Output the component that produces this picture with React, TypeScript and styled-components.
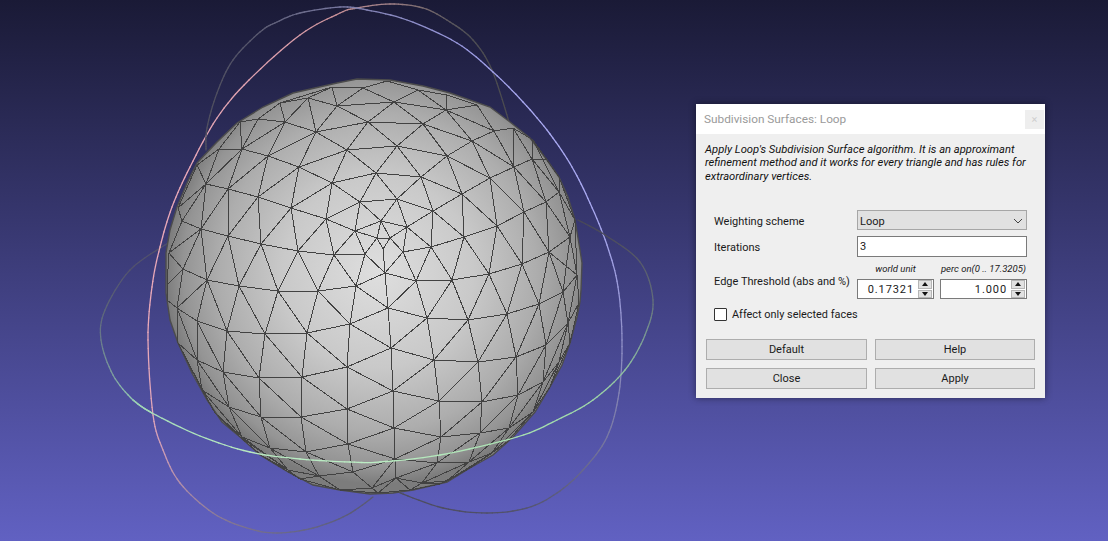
import React, { useMemo } from "react";
import styled, { createGlobalStyle } from "styled-components";

const Global = createGlobalStyle`
  html, body { margin: 0; padding: 0; width: 1108px; height: 541px; overflow: hidden; }
  #root { width: 1108px; height: 541px; }
`;

const Viewport = styled.div`
  position: relative;
  width: 1108px;
  height: 541px;
  overflow: hidden;
  background: linear-gradient(180deg, #1a1a36 0%, #6161c2 100%);
  font-family: Roboto, "Noto Sans", sans-serif;
`;
const Scene = styled.svg`
  position: absolute;
  inset: 0;
  display: block;
`;
const Dialog = styled.div`
  position: absolute;
  left: 696px;
  top: 104px;
  width: 349px;
  height: 294px;
  background: #efefef;
  box-shadow: 0 0 7px rgba(0, 0, 0, 0.45);
  display: flex;
  flex-direction: column;
  color: #1a1a1a;
  font-size: 11px;
`;
const TitleBar = styled.div`
  height: 30px;
  background: #ffffff;
  display: flex;
  align-items: center;
  justify-content: space-between;
  padding: 0 1px 0 8px;
`;
const Title = styled.span`
  font-size: 11.8px;
  color: #9a9a9a;
`;
const CloseButton = styled.div`
  width: 19px;
  height: 19px;
  background: #eeeeee;
  color: #cfcfcf;
  font-size: 11px;
  line-height: 19px;
  text-align: center;
`;
const Description = styled.p`
  margin: 9px 9px 0;
  font-style: italic;
  font-size: 11.2px;
  line-height: 13.4px;
  height: 40px;
  color: #111;
`;
const Form = styled.div`
  margin: 27px 18px 0;
  display: grid;
  grid-template-columns: 143px 170px;
  row-gap: 6px;
  align-items: center;
`;
const Label = styled.label`
  font-size: 11px;
  padding-top: 2px;
  white-space: nowrap;
`;
const Select = styled.div`
  height: 20px;
  box-sizing: border-box;
  background: #e1e1e1;
  border: 1px solid #a6a6a6;
  display: flex;
  align-items: center;
  justify-content: space-between;
  padding: 2px 3px 0 2px;
  font-size: 11px;
`;
const TextInput = styled.div`
  height: 21px;
  box-sizing: border-box;
  background: #fff;
  border: 1px solid #7a7a7a;
  padding-left: 2px;
  line-height: 20px;
  font-size: 11px;
`;
const EdgeLabel = styled(Label)`
  align-self: start;
  padding-top: 12px;
`;
const EdgeFields = styled.div`
  margin-top: -1px;
  display: grid;
  grid-template-columns: 77px 87px;
  column-gap: 6px;
`;
const Hint = styled.span`
  font-style: italic;
  font-size: 9.5px;
  line-height: 14px;
  height: 17px;
  text-align: center;
  white-space: nowrap;
`;
const Spin = styled.div`
  height: 20px;
  box-sizing: border-box;
  background: #fff;
  border: 1px solid #7a7a7a;
  display: flex;
  align-items: center;
  justify-content: flex-end;
  font-size: 11px;
  letter-spacing: 0.9px;
`;
const SpinValue = styled.span`
  margin-right: 4px;
`;
const SpinButtons = styled.div`
  width: 14px;
  height: 18px;
  margin-right: 1px;
  display: flex;
  flex-direction: column;
  gap: 1px;
`;
const SpinButton = styled.div<{ $up?: boolean }>`
  flex: 1;
  background: #e1e1e1;
  border: 1px solid #b5b5b5;
  display: flex;
  align-items: center;
  justify-content: center;
  &::after {
    content: "";
    border-left: 3.5px solid transparent;
    border-right: 3.5px solid transparent;
    ${(p) => (p.$up ? "border-bottom: 4px solid #111;" : "border-top: 4px solid #111;")}
  }
`;
const CheckRow = styled.div`
  margin: 9px 0 0 18px;
  display: flex;
  align-items: center;
  gap: 5px;
  font-size: 10.9px;
`;
const CheckBox = styled.span`
  width: 13px;
  height: 13px;
  box-sizing: border-box;
  background: #fff;
  border: 1px solid #333;
  border-radius: 1px;
`;
const Buttons = styled.div`
  margin: 18px 10px 0;
  display: grid;
  grid-template-columns: 161px 160px;
  column-gap: 8px;
  row-gap: 8px;
`;
const Button = styled.div`
  height: 21px;
  box-sizing: border-box;
  background: #e1e1e1;
  border: 1px solid #adadad;
  text-align: center;
  line-height: 20px;
  font-size: 11px;
`;

const P: Record<string, [number, number]> = {
  v1:[337,106],v2:[394,102],v3:[446,110],v4:[285,122],v5:[316,132],v6:[368,122],v7:[423,124],v8:[472,141],v9:[299,167],v10:[347,150],
  v11:[397,146],v12:[447,156],v13:[490,178],v14:[332,183],v15:[376,173],v16:[421,177],v17:[462,194],v18:[291,208],v19:[360,202],v20:[397,199],
  v21:[433,211],v22:[497,226],v23:[326,219],v24:[381,221],v25:[407,227],v26:[464,237],v27:[355,231],v28:[298,251],v29:[334,255],v30:[365,254],
  v31:[403,252],v32:[431,247],v33:[383,249],v34:[385,273],v35:[416,281],v36:[452,280],v37:[489,274],v38:[356,286],s1:[377,238],s2:[390,238],
  t1:[363,88],t2:[418,90],t3:[308,98],t4:[280,103],t5:[332,87],t6:[387,81],t7:[477,105],t8:[494,131],t9:[513,128],t10:[533,140],t11:[447,95],
  a1:[268,156],a2:[242,149],a3:[258,197],a4:[228,189],a5:[206,184],a6:[201,229],a7:[228,236],a8:[261,244],a9:[318,291],a10:[278,291],a11:[239,286],
  a12:[207,280],a13:[183,269],a14:[169,253],a15:[182,221],a16:[258,119],f1:[219,149],f2:[197,165],f3:[240,122],f4:[178,208],
  b1:[388,308],b2:[350,324],b3:[307,333],b4:[265,334],b5:[227,331],b6:[197,321],b7:[177,308],b8:[347,367],b9:[302,377],b10:[259,378],
  b11:[223,372],b12:[197,360],b13:[178,343],b14:[347,409],b15:[301,417],b16:[261,417],b17:[229,407],b18:[202,390],b19:[348,444],b20:[306,452],
  b21:[270,448],b22:[242,437],b23:[353,472],b24:[319,476],b25:[288,470],b26:[372,488],
  c1:[427,318],c2:[391,348],c3:[434,360],c4:[393,391],c5:[439,401],c6:[394,428],c7:[441,437],c8:[395,459],c9:[437,463],c10:[396,478],c11:[422,483],
  d1:[468,320],d2:[507,314],d3:[539,304],d4:[563,292],d5:[478,362],d6:[516,357],d7:[546,345],d8:[568,323],d9:[482,402],d10:[518,395],d11:[543,382],
  d12:[559,362],d13:[480,433],d14:[509,428],d15:[533,412],d16:[469,462],d17:[492,453],d18:[447,481],
  e1:[514,167],e2:[532,159],e3:[524,212],e4:[546,202],e5:[559,192],e6:[549,252],e7:[570,237],e8:[522,264],e9:[577,275],e10:[575,220],e11:[559,177],e12:[547,160],
  g1:[550,387],h2:[190,366],h3:[215,413],h4:[240,437],h5:[262,456],h6:[300,479],h7:[340,490],h8:[378,493],h9:[410,490],h10:[440,484],h11:[470,468],h12:[507,442],h14:[579,303],h15:[570,343],
  r1:[167,285],r2:[167,300],
};

const CHAINS = [
  "a13 a12 a11 a10 a9 v38 v34 v35 v36 v37 e8 e6 e7 e10",
  "b7 b6 b5 b4 b3 b2 b1 c1 d1 d2 d3 d4 e9",
  "b13 b12 b11 b10 b9 b8 c2 c3 d5 d6 d7 d8",
  "b18 b17 b16 b15 b14 c4 c5 d9 d10 d11 d12",
  "b22 b21 b20 b19 c6 c7 d13 d14 d15 g1",
  "b25 b24 b23 c8 c9 d16 d17 h12",
  "b26 c10 c11 d18",
  "b7 a12 b6 a12 b5 a11 b4 a10 b3 a9 b2 v38 b1 v34",
  "b1 v35 c1 v36 d1 v37 d2 e8 d3 e6 d4 e7 e9 e6",
  "b7 b12 b6 b11 b5 b10 b4 b9 b3 b8 b2 c2 b1",
  "c2 c1 c3 d1 d5 d2 d6 d3 d7 d4 d8 e9",
  "b13 b18 b12 b17 b11 b16 b10 b15 b9 b14 b8 c4 c2",
  "c4 c3 c5 d5 d9 d6 d10 d7 d11 d8 d12",
  "b18 b22 b17 b21 b16 b20 b15 b19 b14 c6 c4",
  "c6 c5 c7 d9 d13 d10 d14 d11 d15 d12 g1",
  "b22 b25 b21 b24 b20 b23 b19 c8 c6",
  "c8 c7 c9 d13 d16 d14 d17 d15",
  "b23 b26 c8 c10 c9 c11 d16 d18 d17",
  "a14 a6 a7 a8 v28 v29 v30 s1 v33 s2 v31 v32 v26 v22 e3 e4 e5 e11",
  "a14 a13 a6 a12 a7 a11 a8 a10 v28 a9 v29 v38 v30 v34 v33",
  "v34 v31 v35 v32 v36 v26 v37 v22 e8 e3 e6 e4 e7 e5 e10 e7",
  "a15 a5 a4 a3 v18 v23 v27",
  "a5 a6 a4 a7 a3 a8 v18 v28 v23 v29 v27 v30",
  "v27 s1 v24 s2 v25 v31",
  "v27 v24 v25 v32 v21 v25",
  "s1 s2",
  "v21 v26 v17 v22 v13 e3 e1 e4 e2 e5",
  "a5 a2 a4 a1 a3 v9 v18 v14 v23 v19 v27",
  "f3 a16 v4 v5 v6 v7 v8 t8",
  "t4 t3 v1 v2 v3 t8 t9 t10 e12",
  "v4 t3 v5 v1 v6 v2 v7 v3 v8 t8 e1 t9 e2 t10 e5",
  "a16 t4 v4 a2 a16",
  "t4 t5 t3",
  "t5 v1 t1 v2 t2 v3 t11 t7 t8",
  "t5 t1 t6 t2 t11",
  "v3 t7",
  "a2 a1 v9 v10 v11 v12 v13 e1 e2 e12 e11",
  "v4 a1 v5 v9",
  "v5 v10 v6 v11 v7 v12 v8 v13",
  "e1 v8",
  "v14 v15 v16 v17",
  "v9 v14 v10 v15 v11 v16 v12 v17 v13",
  "v23 v19 v20 v21",
  "v14 v19 v15 v20 v16 v21 v17",
  "v19 v24 v20 v25",
  "f1 a2 f3 f1 a5 f2 f1",
  "f4 a5 a6 a15 f4 f2",
  "a14 a15",
  "a13 b7 r2 r1 a13",
  "r1 a14",
  "b7 b13 h2 b18 h3 b22 h4 b25 h5 h4 h3 h2",
  "b25 h6 h5",
  "b24 h6 h7 b24",
  "h7 b26 h8 h7",
  "c10 h8 h9 c10",
  "c11 h9 h10 c11",
  "d18 h10 h11 d18",
  "d17 h11 h12 d15",
  "d8 h14 e9",
  "d8 h15 h14",
  "d12 h15 g1",
  "e10 e11",
  "e9 e10",
];

const SILHOUETTE =
  "357,79 390,80 423,86 450,93 490,107 510,122 530,138 547,160 559,177 568,197 575,220 580,250 582,263 581,290 580,302 577,317 570,343 562,365 550,387 535,412 513,437 493,455 470,468 447,482 413,490 393,493 370,494 340,490 313,485 288,472 260,455 240,437 222,422 207,400 192,373 178,343 170,320 166,293 166,253 170,230 177,207 187,183 197,163 217,142 237,123 263,107 293,93 337,83";

type RingPoint = [number, number, string];

const hex = (c: string) => [1, 3, 5].map((i) => parseInt(c.slice(i, i + 2), 16));
const mix = (a: string, b: string, t: number) => {
  const A = hex(a);
  const B = hex(b);
  return `rgb(${A.map((v, i) => Math.round(v + (B[i] - v) * t)).join(",")})`;
};

function Ring({ points, width = 1.3 }: { points: RingPoint[]; width?: number }) {
  const segments = useMemo(() => {
    const out: { d: string; stroke: string }[] = [];
    for (let i = 0; i < points.length - 1; i++) {
      const p0 = points[Math.max(0, i - 1)];
      const p1 = points[i];
      const p2 = points[i + 1];
      const p3 = points[Math.min(points.length - 1, i + 2)];
      let prev: [number, number] = [p1[0], p1[1]];
      const N = 8;
      for (let s = 1; s <= N; s++) {
        const t = s / N;
        const f = (k: 0 | 1) =>
          0.5 *
          (2 * p1[k] +
            (p2[k] - p0[k]) * t +
            (2 * p0[k] - 5 * p1[k] + 4 * p2[k] - p3[k]) * t * t +
            (3 * p1[k] - p0[k] - 3 * p2[k] + p3[k]) * t * t * t);
        const cur: [number, number] = [f(0), f(1)];
        out.push({
          d: `M${prev[0].toFixed(1)} ${prev[1].toFixed(1)}L${cur[0].toFixed(1)} ${cur[1].toFixed(1)}`,
          stroke: mix(p1[2], p2[2], t),
        });
        prev = cur;
      }
    }
    return out;
  }, [points]);
  return (
    <g fill="none" strokeWidth={width} strokeLinecap="round">
      {segments.map((s, i) => (
        <path key={i} d={s.d} stroke={s.stroke} />
      ))}
    </g>
  );
}

const GREEN_BACK: RingPoint[] = [
  [168,243,"#50506a"],[130,270,"#52526e"],[105,310,"#5c6478"],[101,340,"#68788a"],[113,375,"#7c9c9c"],[133,400,"#94c8b0"],[152,413,"#a6dcb8"],
];
const GREEN_FRONT: RingPoint[] = [
  [133,400,"#94c8b0"],[152,413,"#a6dcb8"],[200,436,"#aee4bc"],[250,452,"#b8e8c0"],[300,459,"#b8eac2"],[350,462,"#bcecc4"],[380,462,"#bcecc4"],
  [440,455,"#b4e8bc"],[517,437,"#a8e0b0"],[557,420,"#a2dcac"],[593,400,"#a0d8a8"],[625,370,"#90c0a0"],[645,335,"#7c9c94"],[653,300,"#64707c"],[640,262,"#585c6c"],[605,235,"#4c4c5c"],[578,220,"#484858"],
];
const PINK: RingPoint[] = [
  [373,497,"#5a5a70"],[347,515,"#5c5c78"],[313,528,"#646482"],[277,533,"#6c6a8a"],[247,528,"#78708e"],[213,513,"#8c7c98"],[180,483,"#b08ea8"],[163,450,"#cc9cb4"],[153,415,"#dca4b8"],
  [148,340,"#e8a8b8"],[152,287,"#e8a8b8"],[160,247,"#e8a8b8"],[172,207,"#e8a8b8"],[190,167,"#e8a8b8"],[217,118,"#e4a6b4"],[249,80,"#e0a2b0"],[300,35,"#d89ca8"],
  [340,13,"#c89098"],[357,8,"#b88c90"],[390,4,"#a08088"],[423,8,"#7c6c70"],[450,22,"#5e5a60"],[473,40,"#4e4e54"],[492,70,"#4c4c50"],[510,125,"#4c4c50"],
];
const BLUE: RingPoint[] = [
  [206,150,"#505060"],[207,128,"#505060"],[217,93,"#505060"],[233,60,"#525266"],[260,32,"#5a5a70"],[277,22,"#62627c"],[300,13,"#6a6a88"],[340,7,"#7878a0"],[367,10,"#8080b0"],
  [407,20,"#8c8cc4"],[457,43,"#9898dc"],[493,72,"#a0a0e8"],[523,102,"#a8a8f0"],[550,134,"#aaaaf2"],[572,167,"#aaaaf2"],[590,203,"#aaaaf2"],[607,245,"#a4a4e8"],[618,287,"#9c9cdc"],[622,340,"#9090c8"],
  [619,393,"#8484b4"],[607,437,"#7a7aa4"],[583,470,"#6a6a8c"],[557,493,"#5e5e7c"],[527,508,"#565670"],[487,513,"#505068"],[443,508,"#4e4e62"],[400,493,"#4e4e5e"],
];

function MeshLabScene() {
  const edges = useMemo(() => {
    const seen = new Set<string>();
    const out: [number, number, number, number][] = [];
    CHAINS.forEach((c) => {
      const n = c.split(" ");
      for (let i = 0; i < n.length - 1; i++) {
        const k = [n[i], n[i + 1]].sort().join("-");
        if (seen.has(k) || n[i] === n[i + 1]) continue;
        seen.add(k);
        const a = P[n[i]];
        const b = P[n[i + 1]];
        if (a && b) out.push([a[0], a[1], b[0], b[1]]);
      }
    });
    return out;
  }, []);
  return (
    <Scene width={1108} height={541} viewBox="0 0 1108 541">
      <defs>
        <radialGradient id="ball" gradientUnits="userSpaceOnUse" cx={378} cy={272} r={212}>
          <stop offset="0" stopColor="#dedede" />
          <stop offset="0.45" stopColor="#c9c9c9" />
          <stop offset="0.75" stopColor="#adadad" />
          <stop offset="0.92" stopColor="#949494" />
          <stop offset="1" stopColor="#7c7c7c" />
        </radialGradient>
      </defs>
      <Ring points={GREEN_BACK} />
      <Ring points={PINK} />
      <Ring points={BLUE} />
      <polygon points={SILHOUETTE} fill="url(#ball)" stroke="#4c4c4c" strokeWidth={1.4} />
      <g stroke="#424242" strokeWidth={1} shapeRendering="crispEdges">
        {edges.map((e, i) => (
          <line key={i} x1={e[0]} y1={e[1]} x2={e[2]} y2={e[3]} />
        ))}
      </g>
      <Ring points={GREEN_FRONT} />
    </Scene>
  );
}

export default function App() {
  return (
    <>
      <Global />
      <Viewport>
        <MeshLabScene />
        <Dialog>
          <TitleBar>
            <Title>Subdivision Surfaces: Loop</Title>
            <CloseButton>×</CloseButton>
          </TitleBar>
          <Description>
            Apply Loop's Subdivision Surface algorithm. It is an approximant refinement method and it works for every triangle and has rules for extraordinary vertices.
          </Description>
          <Form>
            <Label>Weighting scheme</Label>
            <Select>
              Loop
              <svg width="10" height="6" viewBox="0 0 10 6">
                <path d="M1 1 L5 5 L9 1" fill="none" stroke="#444" strokeWidth="1" />
              </svg>
            </Select>
            <Label>Iterations</Label>
            <TextInput>3</TextInput>
            <EdgeLabel>Edge Threshold (abs and %)</EdgeLabel>
            <EdgeFields>
              <Hint>world unit</Hint>
              <Hint>perc on(0 .. 17.3205)</Hint>
              <Spin>
                <SpinValue>0.17321</SpinValue>
                <SpinButtons>
                  <SpinButton $up />
                  <SpinButton />
                </SpinButtons>
              </Spin>
              <Spin>
                <SpinValue>1.000</SpinValue>
                <SpinButtons>
                  <SpinButton $up />
                  <SpinButton />
                </SpinButtons>
              </Spin>
            </EdgeFields>
          </Form>
          <CheckRow>
            <CheckBox />
            Affect only selected faces
          </CheckRow>
          <Buttons>
            <Button>Default</Button>
            <Button>Help</Button>
            <Button>Close</Button>
            <Button>Apply</Button>
          </Buttons>
        </Dialog>
      </Viewport>
    </>
  );
}
